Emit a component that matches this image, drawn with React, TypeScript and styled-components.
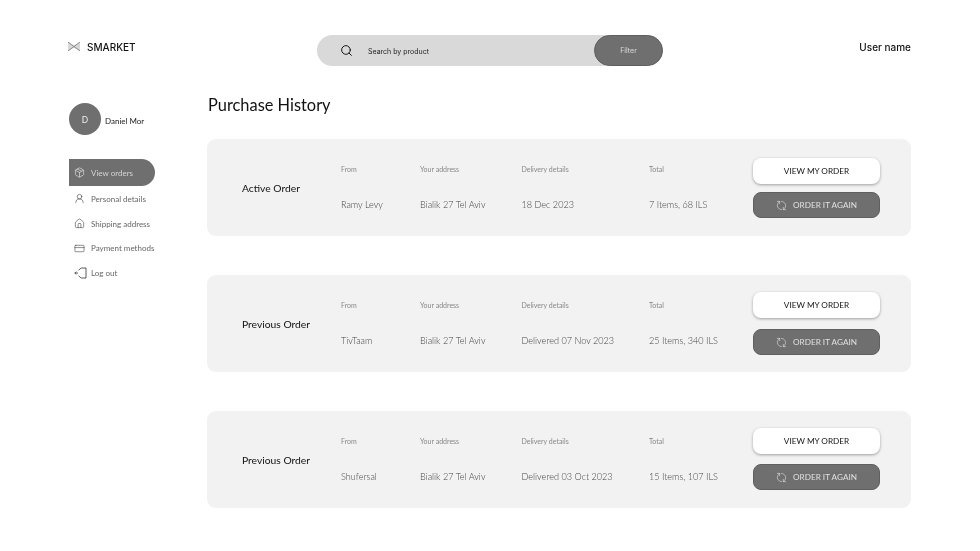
import React from "react";
import styled, { createGlobalStyle } from "styled-components";
import { Package, UserRound, House, CreditCard, Search, RefreshCw } from "lucide-react";

const Global = createGlobalStyle`
  html, body { margin: 0; padding: 0; background: #fff; }
  body { width: 980px; height: 551px; overflow: hidden; font-family: "Lato", "Liberation Sans", sans-serif; }
`;

const Page = styled.div`
  width: 980px;
  height: 551px;
  box-sizing: border-box;
  padding: 35px 69px 0 68px;
  will-change: transform;
`;

const Header = styled.header`
  display: grid;
  grid-template-columns: 249px 346px 1fr;
  height: 31px;
`;

const Brand = styled.div`
  display: flex;
  align-items: center;
  gap: 7px;
  height: 23px;
  font: 500 10px "Inter", sans-serif;
  color: #111;
`;

const SearchBar = styled.div`
  display: flex;
  align-items: center;
  height: 31px;
  background: #d9d9d9;
  border-radius: 16px;
`;

const SearchIcon = styled.span`
  display: flex;
  margin-left: 23px;
  color: #111;
`;

const SearchText = styled.span`
  margin-left: 15px;
  flex: 1;
  font: 400 7px "Inter", sans-serif;
  color: #222;
  padding-top: 2px;
`;

const FilterButton = styled.div`
  width: 69px;
  height: 31px;
  box-sizing: border-box;
  display: flex;
  align-items: center;
  justify-content: center;
  background: #6f6f6f;
  border: 1px solid #5f5f5f;
  border-radius: 16px;
  color: #ddd;
  font: 400 7px "Inter", sans-serif;
`;

const UserName = styled.div`
  justify-self: end;
  height: 23px;
  display: flex;
  align-items: center;
  font: 500 10px "Inter", sans-serif;
  color: #111;
`;

const Body = styled.div`
  display: grid;
  grid-template-columns: 139px 704px;
  margin-top: 27px;
`;

const Sidebar = styled.aside`
  display: flex;
  flex-direction: column;
  padding: 10px 0 0 1px;
`;

const Profile = styled.div`
  display: flex;
  align-items: center;
  gap: 4px;
  margin-bottom: 24px;
`;

const Avatar = styled.div`
  width: 32px;
  height: 32px;
  border-radius: 50%;
  background: #6f6f6f;
  color: #efefef;
  display: flex;
  align-items: center;
  justify-content: center;
  font: 400 9px "Inter", sans-serif;
`;

const ProfileName = styled.span`
  font-size: 8px;
  color: #222;
  padding-top: 3px;
`;

const NavList = styled.nav`
  display: flex;
  flex-direction: column;
`;

const NavItem = styled.div<{ $active?: boolean; $h: number; $gap?: number }>`
  display: flex;
  align-items: center;
  gap: ${(p) => p.$gap ?? 6}px;
  width: 86px;
  box-sizing: border-box;
  height: ${(p) => p.$h}px;
  padding-left: 5px;
  font-size: 8px;
  font-weight: 400;
  white-space: nowrap;
  color: ${(p) => (p.$active ? "#d4d4d4" : "#666")};
  background: ${(p) => (p.$active ? "#6f6f6f" : "transparent")};
  border-radius: ${(p) => (p.$active ? "0 14px 14px 0" : "0")};
  svg { flex: none; color: ${(p) => (p.$active ? "#e6e6e6" : "#333")}; }
`;

const Main = styled.main``;

const Title = styled.h1`
  margin: 0;
  height: 22px;
  padding-left: 1px;
  display: flex;
  align-items: center;
  font: 400 16.4px "Lato", sans-serif;
  color: #111;
`;

const Cards = styled.div`
  display: flex;
  flex-direction: column;
  gap: 39px;
  margin-top: 24px;
`;

const Card = styled.section`
  height: 97px;
  box-sizing: border-box;
  background: #f2f2f2;
  border-radius: 9px;
  display: grid;
  grid-template-columns: 99px 79px 101.5px 127.5px 104px 127px;
  padding-left: 35px;
`;

const CardTitle = styled.div`
  padding-top: 42px;
  font: 400 10.3px/14px "Lato", sans-serif;
  color: #111;
`;

const Col = styled.div`
  display: flex;
  flex-direction: column;
  padding-top: 26px;
`;

const Label = styled.div`
  font-size: 7px;
  font-weight: 400;
  line-height: 9px;
  color: #888;
`;

const Value = styled.div`
  margin-top: 24px;
  font-size: 9.1px;
  font-weight: 300;
  line-height: 14px;
  color: #444;
  white-space: nowrap;
`;

const Actions = styled.div<{ $top: number; $gap: number }>`
  display: flex;
  flex-direction: column;
  gap: ${(p) => p.$gap}px;
  padding-top: ${(p) => p.$top}px;
`;

const ViewButton = styled.div`
  height: 26px;
  border-radius: 8px;
  background: #fff;
  box-shadow: 0 1px 3px rgba(0, 0, 0, 0.35);
  display: flex;
  align-items: center;
  justify-content: center;
  font: 400 8.2px "Lato", sans-serif;
  color: #111;
`;

const AgainButton = styled.div`
  height: 26px;
  box-sizing: border-box;
  border-radius: 8px;
  background: #6f6f6f;
  border: 1px solid #5f5f5f;
  display: flex;
  align-items: center;
  justify-content: center;
  gap: 6px;
  font: 400 8.2px "Lato", sans-serif;
  color: #e0e0e0;
  svg { transform: rotate(90deg); color: #e6e6e6; }
`;

const Logo = () => (
  <svg width="12" height="9" viewBox="0 0 12 9">
    <path d="M0 0L6 3.5L12 0V9L6 5.5L0 9Z" fill="#d8d8d8" />
    <path d="M0 0L12 9M12 0L0 9" stroke="#8a8a8a" strokeWidth="1" fill="none" />
  </svg>
);

const LogoutIcon = () => (
  <svg width="13" height="12" viewBox="0 0 13 12" fill="none" stroke="#333" strokeWidth="0.8">
    <path d="M4.5 3.2L7.2 1H12V11H7.2L4.5 8.8" />
    <path d="M4 6H0.8M2.2 4.6L0.8 6L2.2 7.4" />
  </svg>
);

const orders = [
  { title: "Active Order", from: "Ramy Levy", delivery: "18 Dec 2023", total: "7 Items, 68 ILS", top: 19, gap: 8 },
  { title: "Previous Order", from: "TivTaam", delivery: "Delivered 07 Nov 2023", total: "25 Items, 340 ILS", top: 17, gap: 11 },
  { title: "Previous Order", from: "Shufersal", delivery: "Delivered 03 Oct 2023", total: "15 Items, 107 ILS", top: 17, gap: 10 },
];

export default function App() {
  return (
    <Page>
      <Global />
      <Header>
        <Brand>
          <Logo />
          SMARKET
        </Brand>
        <SearchBar>
          <SearchIcon>
            <Search size={13} strokeWidth={1.8} />
          </SearchIcon>
          <SearchText>Search by product</SearchText>
          <FilterButton>Filter</FilterButton>
        </SearchBar>
        <UserName>User name</UserName>
      </Header>
      <Body>
        <Sidebar>
          <Profile>
            <Avatar>D</Avatar>
            <ProfileName>Daniel Mor</ProfileName>
          </Profile>
          <NavList>
            <NavItem $active $h={27}>
              <Package size={11} strokeWidth={1.4} />
              View orders
            </NavItem>
            <NavItem $h={25}>
              <UserRound size={11} strokeWidth={1.2} />
              Personal details
            </NavItem>
            <NavItem $h={25}>
              <House size={11} strokeWidth={1.2} />
              Shipping address
            </NavItem>
            <NavItem $h={24}>
              <CreditCard size={11} strokeWidth={1.2} />
              Payment methods
            </NavItem>
            <NavItem $h={25} $gap={4}>
              <LogoutIcon />
              Log out
            </NavItem>
          </NavList>
        </Sidebar>
        <Main>
          <Title>Purchase History</Title>
          <Cards>
            {orders.map((o, i) => (
              <Card key={i}>
                <CardTitle>{o.title}</CardTitle>
                <Col>
                  <Label>From</Label>
                  <Value>{o.from}</Value>
                </Col>
                <Col>
                  <Label>Your address</Label>
                  <Value>Bialik 27 Tel Aviv</Value>
                </Col>
                <Col>
                  <Label>Delivery details</Label>
                  <Value>{o.delivery}</Value>
                </Col>
                <Col>
                  <Label>Total</Label>
                  <Value>{o.total}</Value>
                </Col>
                <Actions $top={o.top} $gap={o.gap}>
                  <ViewButton>VIEW MY ORDER</ViewButton>
                  <AgainButton>
                    <RefreshCw size={11} strokeWidth={1.3} />
                    ORDER IT AGAIN
                  </AgainButton>
                </Actions>
              </Card>
            ))}
          </Cards>
        </Main>
      </Body>
    </Page>
  );
}
